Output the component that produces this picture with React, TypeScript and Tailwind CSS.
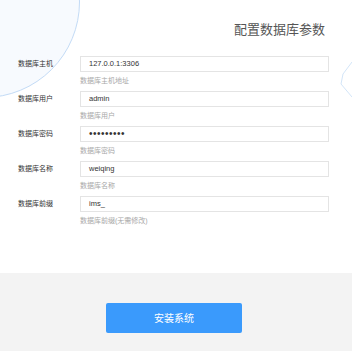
import React from 'react';

const fields = [
  { label: '数据库主机', value: '127.0.0.1:3306', hint: '数据库主机地址' },
  { label: '数据库用户', value: 'admin', hint: '数据库用户' },
  { label: '数据库密码', value: '•••••••••', hint: '数据库密码', secret: true },
  { label: '数据库名称', value: 'weiqing', hint: '数据库名称' },
  { label: '数据库前缀', value: 'ims_', hint: '数据库前缀(无需修改)' },
];

export default function App() {
  return (
    <div
      className="relative w-[352px] h-[351px] overflow-hidden bg-white flex flex-col"
      style={{ fontFamily: '"Liberation Sans", "Noto Sans CJK SC", sans-serif' }}
    >
      {/* background decorations */}
      <div className="absolute left-[-112px] top-[-94px] w-[192px] h-[192px] rounded-full bg-[#f7fafe] border border-[#c3dbf6]" />
      <svg className="absolute left-[336px] top-[58px]" width="16" height="42" viewBox="0 0 16 42">
        <polyline points="16,4 7,16 5,26 16,39" fill="none" stroke="#d3e5f8" strokeWidth="1" />
      </svg>

      <div className="relative flex-1">
        <h1 className="pt-[22px] pr-[27px] text-right text-[13px] leading-[15px] text-[#555]">
          配置数据库参数
        </h1>

        <div className="mt-[19px]">
          {fields.map((f) => (
            <div key={f.label} className="mb-[6px]">
              <div className="flex items-center">
                <div className="w-[80px] pl-[18px] text-[7px] text-[#333]">{f.label}</div>
                <div className="w-[249px] h-[16px] border border-[#e4e4e4] bg-white flex items-center pl-[8px]">
                  {f.secret ? (
                    <span className="text-[10px] leading-none tracking-[0.5px] text-[#333]">{f.value}</span>
                  ) : (
                    <span className="text-[7.5px] leading-none text-[#333]">{f.value}</span>
                  )}
                </div>
              </div>
              <div className="ml-[80px] mt-[4px] text-[7px] leading-[9px] text-[#a8a8a8]">{f.hint}</div>
            </div>
          ))}
        </div>
      </div>

      <div className="h-[78px] bg-[#f3f3f3] flex justify-center items-start pt-[30px] pr-[4px]">
        <button className="w-[136px] h-[30px] rounded-[2px] bg-[#3a9afc] text-white text-[10px]">
          安装系统
        </button>
      </div>
    </div>
  );
}
